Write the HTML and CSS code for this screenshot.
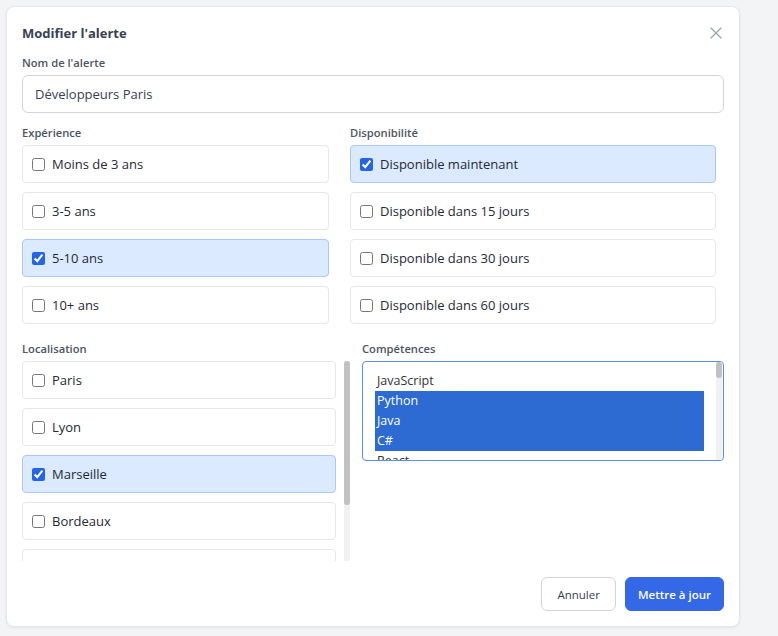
FILE: index.html
```html
<!DOCTYPE html>
<html lang="fr">
<head>
<meta charset="utf-8">
<title>Modifier l'alerte</title>
<link rel="stylesheet" href="styles.css">
</head>
<body>
<div class="modal">
  <div class="header">
    <h2 class="title">Modifier l'alerte</h2>
    <button class="close" aria-label="Fermer">
      <svg width="12" height="12" viewBox="0 0 12 12"><path d="M1 1L11 11M11 1L1 11" stroke="#9ca3af" stroke-width="1.3" fill="none" stroke-linecap="round"/></svg>
    </button>
  </div>

  <div class="field">
    <label class="label">Nom de l'alerte</label>
    <input class="input" type="text" value="Développeurs Paris">
  </div>

  <div class="row-top">
    <div class="group">
      <div class="label">Expérience</div>
      <div class="options">
        <label class="opt"><input type="checkbox"><span>Moins de 3 ans</span></label>
        <label class="opt"><input type="checkbox"><span>3-5 ans</span></label>
        <label class="opt on"><input type="checkbox" checked><span>5-10 ans</span></label>
        <label class="opt"><input type="checkbox"><span>10+ ans</span></label>
      </div>
    </div>
    <div class="group">
      <div class="label">Disponibilité</div>
      <div class="options">
        <label class="opt on"><input type="checkbox" checked><span>Disponible maintenant</span></label>
        <label class="opt"><input type="checkbox"><span>Disponible dans 15 jours</span></label>
        <label class="opt"><input type="checkbox"><span>Disponible dans 30 jours</span></label>
        <label class="opt"><input type="checkbox"><span>Disponible dans 60 jours</span></label>
      </div>
    </div>
  </div>

  <div class="row-bottom">
    <div class="group">
      <div class="label">Localisation</div>
      <div class="scroll-wrap">
        <div class="options scroll">
          <label class="opt"><input type="checkbox"><span>Paris</span></label>
          <label class="opt"><input type="checkbox"><span>Lyon</span></label>
          <label class="opt on"><input type="checkbox" checked><span>Marseille</span></label>
          <label class="opt"><input type="checkbox"><span>Bordeaux</span></label>
          <label class="opt"><input type="checkbox"><span>Toulouse</span></label>
          <label class="opt"><input type="checkbox"><span>Lille</span></label>
        </div>
        <div class="vbar"><div class="vbar-thumb"></div></div>
      </div>
    </div>
    <div class="group">
      <div class="label">Compétences</div>
      <div class="listbox" role="listbox" aria-multiselectable="true">
        <div class="lb-inner">
          <div class="lb-opt">JavaScript</div>
          <div class="lb-opt sel">Python</div>
          <div class="lb-opt sel">Java</div>
          <div class="lb-opt sel">C#</div>
          <div class="lb-opt">React</div>
          <div class="lb-opt">Node.js</div>
          <div class="lb-opt">TypeScript</div>
          <div class="lb-opt">PHP</div>
          <div class="lb-opt">Ruby</div>
          <div class="lb-opt">Go</div>
          <div class="lb-opt">Swift</div>
          <div class="lb-opt">Kotlin</div>
          <div class="lb-opt">Angular</div>
          <div class="lb-opt">Vue.js</div>
          <div class="lb-opt">SQL</div>
          <div class="lb-opt">Docker</div>
          <div class="lb-opt">Kubernetes</div>
          <div class="lb-opt">AWS</div>
          <div class="lb-opt">Azure</div>
          <div class="lb-opt">DevOps</div>
          <div class="lb-opt">Rust</div>
          <div class="lb-opt">Scala</div>
          <div class="lb-opt">C++</div>
          <div class="lb-opt">Django</div>
          <div class="lb-opt">Spring</div>
          <div class="lb-opt">Laravel</div>
          <div class="lb-opt">Symfony</div>
          <div class="lb-opt">Flutter</div>
          <div class="lb-opt">GraphQL</div>
          <div class="lb-opt">MongoDB</div>
        </div>
        <div class="vbar lb-bar"><div class="vbar-thumb lb-thumb"></div></div>
      </div>
    </div>
  </div>

  <div class="footer">
    <button class="btn btn-secondary">Annuler</button>
    <button class="btn btn-primary">Mettre à jour</button>
  </div>
</div>
</body>
</html>
```

FILE: styles.css
```css
* { box-sizing: border-box; }

html, body {
  margin: 0;
  padding: 0;
  background: #f3f4f6;
}

body {
  padding: 6px;
  font-family: "Open Sans", "Noto Sans", sans-serif;
  color: #1f2937;
}

.modal {
  width: 734px;
  height: 621px;
  background: #ffffff;
  border: 1px solid #e5e7eb;
  border-radius: 8px;
  box-shadow: 0 1px 3px rgba(0,0,0,0.06);
  padding: 15px;
  display: flex;
  flex-direction: column;
}

.header {
  display: flex;
  align-items: center;
  justify-content: space-between;
  height: 22px;
  margin-bottom: 11px;
}

.title {
  margin: 0;
  font-size: 13px;
  font-weight: 700;
  color: #374151;
  line-height: 22px;
}

.close {
  border: 0;
  background: none;
  padding: 0;
  margin-right: 2px;
  width: 12px;
  height: 12px;
  display: flex;
}

.label {
  display: block;
  font-size: 11.2px;
  font-weight: 600;
  color: #4b5563;
  line-height: 16px;
  margin-bottom: 4px;
}

.input {
  display: block;
  width: 702px;
  height: 38px;
  border: 1px solid #d1d5db;
  border-radius: 6px;
  padding: 0 12px;
  font-family: inherit;
  font-size: 13px;
  color: #374151;
  outline: none;
}

.field { margin-bottom: 12px; }

.row-top {
  display: grid;
  grid-template-columns: 307px 366px;
  column-gap: 21px;
}

.row-bottom {
  display: grid;
  grid-template-columns: 328px 362px;
  column-gap: 12px;
  margin-top: 17px;
}

.options {
  display: flex;
  flex-direction: column;
  gap: 9px;
}

.opt {
  display: flex;
  align-items: center;
  gap: 7px;
  height: 38px;
  flex-shrink: 0;
  padding: 0 9px;
  border: 1px solid #e5e7eb;
  border-radius: 4px;
  background: #fff;
  font-size: 13px;
  color: #1f2937;
}

.opt input {
  margin: 0;
  width: 13px;
  height: 13px;
  accent-color: #2563eb;
}

.opt.on {
  background: #dbeafe;
  border-color: #a9c9f7;
}

.scroll-wrap {
  display: flex;
  gap: 8px;
  height: 200px;
}

.scroll {
  flex: 1;
  height: 200px;
  overflow: hidden;
}

.vbar {
  width: 6px;
  flex-shrink: 0;
  background: #f1f1f1;
}

.vbar-thumb {
  height: 144px;
  background: #c1c1c1;
  border-radius: 3px;
}

.listbox {
  height: 100px;
  border: 1px solid #5b8def;
  border-radius: 4px;
  overflow: hidden;
  display: flex;
}

.lb-inner {
  flex: 1;
  height: 98px;
  overflow: hidden;
  padding: 9px 12px 0 12px;
}

.lb-bar {
  width: 6px;
  margin-right: 1px;
}

.lb-thumb {
  height: 16px;
}

.lb-opt {
  height: 20px;
  line-height: 20px;
  padding-left: 2px;
  font-size: 12.5px;
  color: #333;
}

.lb-opt.sel {
  background: #2d6bd2;
  color: #fff;
}

.footer {
  margin-top: auto;
  display: flex;
  justify-content: flex-end;
  gap: 9px;
}

.btn {
  height: 34px;
  border-radius: 6px;
  font-family: inherit;
  font-size: 11.5px;
  cursor: pointer;
}

.btn-secondary {
  padding: 0 15px;
  background: #fff;
  border: 1px solid #d1d5db;
  color: #374151;
}

.btn-primary {
  padding: 0 12px;
  background: #3468e6;
  border: 1px solid #3468e6;
  color: #fff;
  font-weight: 600;
}
```
